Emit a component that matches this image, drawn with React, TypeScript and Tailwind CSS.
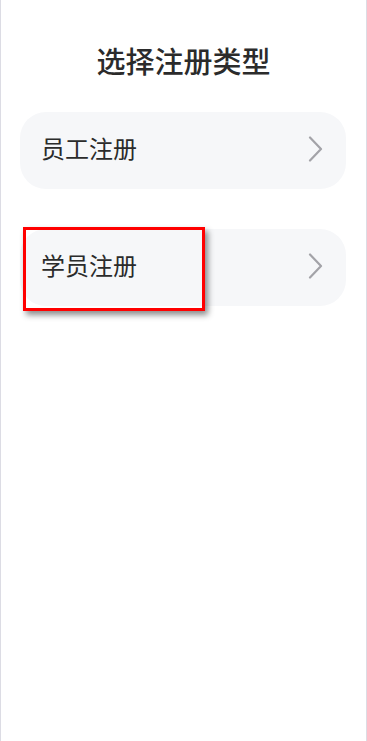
import React from 'react';

const font = { fontFamily: '"Noto Sans CJK SC", "Noto Sans", sans-serif' };

function Chevron() {
  return (
    <svg width="16" height="26" viewBox="0 0 16 26" fill="none" className="-mt-1">
      <path d="M2 1.5 L13 13 L2 24.5" stroke="#a3a3a8" strokeWidth="2.2" strokeLinecap="round" strokeLinejoin="round" />
    </svg>
  );
}

function Row({ label, marked }: { label: string; marked?: boolean }) {
  return (
    <div className="relative ml-[19px] mr-5 h-[77px] rounded-[26px] bg-[#f6f7f9] flex items-center justify-between pl-[21px] pr-[22px]">
      <span className="text-[24px] leading-[30px] text-[#2b2b2b] -mt-[5px]">{label}</span>
      <Chevron />
      {marked && (
        <div className="absolute left-[3px] top-[-2px] w-[182px] h-[84px] border-[3px] border-[#ff0000] shadow-[3px_4px_6px_rgba(0,0,0,0.45)]" />
      )}
    </div>
  );
}

export default function App() {
  return (
    <div style={font} className="w-full h-[741px] bg-white border-l border-r border-[#dcdce4] flex flex-col">
      <h1 className="mt-[41px] text-center text-[29px] font-medium text-[#2b2b2b] leading-[38px]">选择注册类型</h1>
      <div className="mt-[33px] flex flex-col gap-10">
        <Row label="员工注册" />
        <Row label="学员注册" marked />
      </div>
    </div>
  );
}
